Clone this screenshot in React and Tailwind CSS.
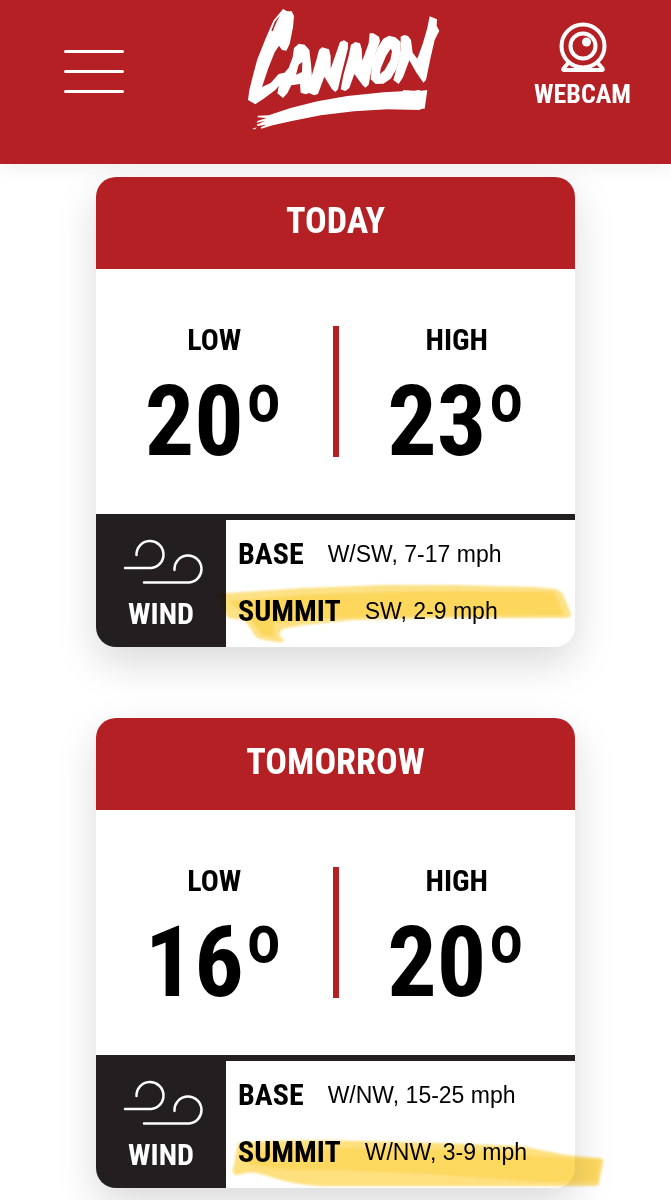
import React from 'react';

const condensed = "font-['Roboto_Condensed','Liberation_Sans_Narrow','Arial_Narrow',sans-serif] font-bold";

const forecast = [
  {
    id: 'today',
    title: 'Today',
    low: 20,
    high: 23,
    base: 'W/SW, 7-17 mph',
    summit: 'SW, 2-9 mph'
  },
  {
    id: 'tomorrow',
    title: 'Tomorrow',
    low: 16,
    high: 20,
    base: 'W/NW, 15-25 mph',
    summit: 'W/NW, 3-9 mph'
  }
];

const CannonLogo = () => (
  <svg className="h-[140px] w-[210px]" viewBox="7 0 630 420" fill="#fff" role="img" aria-label="Cannon">
    {/* C */}
    <path d="M127 27 L140 34 L153 34 L160 48 L157 82 L147 132 L137 152 L124 150 L115 137 L102 157 L82 207 L64 261 L90 249 L114 222 L130 218 L128 242 L104 270 L72 294 L44 313 L22 300 L26 270 L38 222 L50 178 L74 118 L98 62 Z" />
    <path d="M92 92 L102 66 L118 46 L106 70 L96 94 Z" fill="#b52025" />
    {/* A */}
    <path fillRule="evenodd" d="M160 144 L174 131 L192 134 L206 150 L211 192 L214 232 L222 262 L216 284 L205 279 L196 283 L180 278 L178 252 L152 256 L140 280 L127 294 L110 280 L116 250 L126 224 L144 204 L156 172 Z M174 194 L185 186 L184 216 L166 224 Z" />
    {/* N */}
    <path d="M235 150 L244 142 L265 148 L270 168 L270 206 L298 126 L310 121 L322 128 L322 144 L302 224 L292 268 L284 276 L274 268 L251 230 L232 282 L220 286 L208 276 L214 224 L226 184 Z" />
    {/* N */}
    <path d="M331 134 L344 126 L358 130 L363 146 L365 182 L384 130 L387 100 L398 100 L415 110 L418 124 L408 150 L394 200 L384 254 L374 263 L366 256 L341 222 L326 264 L314 273 L300 268 L308 226 L324 168 Z" />
    {/* O */}
    <path fillRule="evenodd" d="M428 116 L445 107 L464 112 L480 126 L480 160 L468 206 L450 236 L428 251 L405 252 L390 238 L394 192 L410 144 Z M450 146 L436 168 L420 206 L418 222 L432 210 L449 180 L454 154 Z" />
    {/* N */}
    <path d="M480 110 L490 105 L502 108 L511 120 L516 158 L530 176 L546 132 L560 84 L567 49 L589 58 L588 78 L596 92 L582 120 L570 172 L556 240 L548 248 L526 216 L506 181 L487 232 L474 252 L458 240 L472 190 L480 150 Z" />
    {/* brush stroke */}
    <path d="M560 270 L552 326 L544 326 L536 330 L440 328 L340 334 L240 346 L150 364 L96 376 L62 386 L60 382 L78 374 L50 378 L48 374 L74 362 L48 368 L50 363 L78 354 L50 352 L52 347 L84 346 L150 324 L230 304 L320 288 L430 277 L486 274 L488 270 L520 272 L534 270 L542 272 Z" />
    <path d="M34 387 L48 382 L44 388 Z" />
  </svg>
);

const WebcamIcon = () => (
  <svg className="h-[50px] w-12" viewBox="0 0 48 50" fill="none" stroke="#fff" strokeWidth="4" aria-hidden="true">
    <circle cx="24" cy="24" r="21.5" />
    <circle cx="24" cy="24" r="12.5" />
    <circle cx="27.5" cy="20" r="4.5" fill="#fff" stroke="none" />
    <path d="M10 40 L4.500 46.500 Q3.500 48 5 48 H43 Q44.500 48 43.500 46.500 L38 40" strokeLinejoin="round" />
  </svg>
);

const WindIcon = () => (
  <svg className="h-12 w-21" viewBox="0 0 84 48" fill="none" stroke="#fff" strokeWidth="2.5" strokeLinecap="round" aria-hidden="true">
    <path d="M17.500 17 A13.500 13.500 0 1 1 32 30 H6" />
    <path d="M55.500 32 A13.500 13.500 0 1 1 70 44.500 H25" />
  </svg>
);

// Hand drawn highlighter marks over the summit rows
const TodayMarker = () => (
  <svg className="pointer-events-none absolute bottom-0 left-[118px] h-[70px] w-[360px] mix-blend-multiply" viewBox="0 0 360 70" aria-hidden="true">
    <defs>
      <filter id="soft-today" x="-5%" y="-20%" width="110%" height="140%">
        <feGaussianBlur stdDeviation="1" />
      </filter>
    </defs>
    <g filter="url(#soft-today)">
      <path d="M2 17 L14 16 L90 11 L170 8 L240 8 L320 10 L342 12 Q348 14 351 22 L357 37 Q358 41 350 41 L230 41 L140 43 L90 48 L68 52 L65 58 L70 63 Q70 66 62 65 L46 62 Q40 60 37 52 L30 43 L14 41 Z" fill="#fde185" />
      <path d="M14 24 L100 17 L220 14 L340 15 L350 38 L220 39 L120 41 L60 46 L60 60 L48 58 L36 42 Z" fill="#fcd75c" />
    </g>
  </svg>
);

const TomorrowMarker = () => (
  <svg className="pointer-events-none absolute bottom-0 left-[134px] h-[50px] w-[376px] mix-blend-multiply" viewBox="0 0 376 50" aria-hidden="true">
    <defs>
      <filter id="soft-tomorrow" x="-5%" y="-20%" width="110%" height="140%">
        <feGaussianBlur stdDeviation="1" />
      </filter>
    </defs>
    <g filter="url(#soft-tomorrow)">
      <path d="M8 5 Q60 1 130 3 L210 5 L290 8 L336 17 L370 20 Q374 20 373 25 L369 45 Q368 49 360 48 L290 48 L90 48 Q60 46 38 38 Q20 32 12 36 L6 37 Q1 36 4 27 Z" fill="#fee07e" />
      <path d="M8 14 L120 10 L240 12 L330 20 L370 22 L367 44 L310 44 L200 36 L110 32 L60 32 L20 27 Z" fill="#fdd85f" />
    </g>
  </svg>
);

const Temperature = ({ label, value }) => (
  <div className="flex flex-1 flex-col items-center text-black">
    <span className="text-[30px] leading-7">{label}</span>
    <span className="mt-[10px] text-[98px] leading-[115px]">{value}º</span>
  </div>
);

const ForecastCard = ({ day }) => (
  <article className="relative rounded-[20px] bg-white shadow-[0_16px_40px_rgba(0,0,0,0.15)]">
    <h2 className={`${condensed} h-[92px] rounded-t-[20px] bg-[#b52025] pt-6 text-center text-[36px] leading-10 text-white uppercase`}>
      {day.title}
    </h2>

    <div className={`${condensed} flex h-[245px] pt-[57px]`}>
      <Temperature label="LOW" value={day.low} />
      <div className="h-[131px] w-[6px] bg-[#b52025]"></div>
      <Temperature label="HIGH" value={day.high} />
    </div>

    <div className="flex h-[133px]">
      <div className="flex w-[130px] flex-col items-center rounded-bl-[20px] bg-[#231f20] pt-6 text-white">
        <WindIcon />
        <span className={`${condensed} mt-3 text-[30px] leading-8`}>WIND</span>
      </div>
      <dl className="flex-1 border-t-6 border-[#231f20] pt-4 pl-3 text-black">
        <div className="flex h-[57px] items-start">
          <dt className={`${condensed} text-[30px] leading-9`}>BASE</dt>
          <dd className="ml-6 font-['Liberation_Sans',Arial,sans-serif] text-[23px] leading-9">{day.base}</dd>
        </div>
        <div className="flex items-start">
          <dt className={`${condensed} text-[30px] leading-9`}>SUMMIT</dt>
          <dd className="ml-6 font-['Liberation_Sans',Arial,sans-serif] text-[23px] leading-9">{day.summit}</dd>
        </div>
      </dl>
    </div>

    {day.id === 'today' ? <TodayMarker /> : <TomorrowMarker />}
  </article>
);

const App = () => (
  <div className="min-h-screen overflow-hidden bg-white">
    <header className="relative z-10 flex h-[164px] items-start justify-between bg-[#b52025] pr-10 pl-16 shadow-[0_2px_20px_rgba(0,0,0,0.08)]">
      <div className="flex-1">
        <button type="button" aria-label="Menu" className="mt-[50px] flex w-15 flex-col gap-[17px]">
          <span className="h-[3px] w-full rounded-full bg-white"></span>
          <span className="h-[3px] w-full rounded-full bg-white"></span>
          <span className="h-[3px] w-full rounded-full bg-white"></span>
        </button>
      </div>
      <a href="#home">
        <CannonLogo />
      </a>
      <div className="flex flex-1 justify-end">
        <a href="#webcam" className="flex flex-col items-center pt-[22px] text-white">
          <WebcamIcon />
          <span className={`${condensed} mt-1 text-[26px] leading-9`}>WEBCAM</span>
        </a>
      </div>
    </header>

    <main className="flex flex-col gap-[71px] px-24 pt-[13px]">
      {forecast.map((day) => (
        <ForecastCard key={day.id} day={day} />
      ))}
    </main>
  </div>
);

export default App;
